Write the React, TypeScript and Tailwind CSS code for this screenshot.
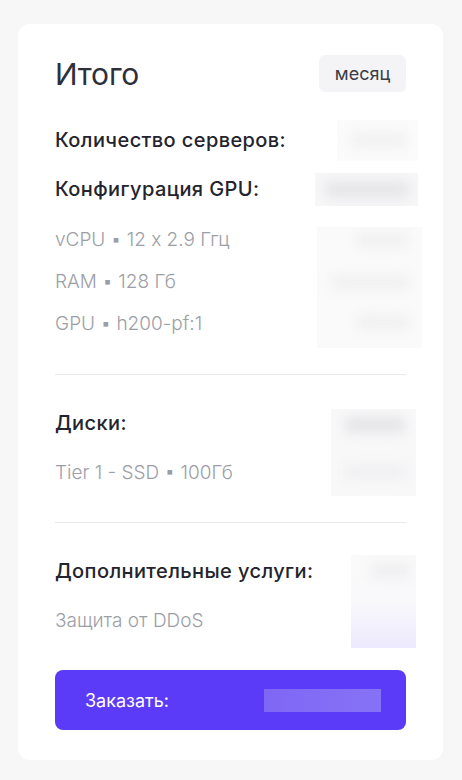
import React from "react";

export default function App() {
  const font = { fontFamily: "Inter, 'Noto Sans', sans-serif" };
  return (
    <div className="min-h-[780px] w-[462px] bg-[#f7f7f7] pt-[24px] pl-[18px]" style={font}>
      <div className="flex w-[425px] flex-col rounded-[12px] bg-white px-[37px] pt-[31px] pb-[30px]">
        {/* header */}
        <div className="flex h-[37px] items-center justify-between">
          <div className="text-[30px] leading-none tracking-[-0.2px] text-[#2d2f3b]">Итого</div>
          <div className="flex h-[37px] w-[87px] items-center justify-center rounded-[6px] bg-[#f4f4f6] text-[18px] text-[#3a3c47]">
            месяц
          </div>
        </div>

        {/* servers */}
        <div className="mt-[31px] flex h-[34px] items-center justify-between">
          <div className="text-[20px] font-medium tracking-[0.4px] text-[#23242d]">Количество серверов:</div>
          <div className="relative -mr-[12px] h-[41px] w-[81px] overflow-hidden bg-[#fbfbfb]">
            <div className="absolute left-[14px] top-[12px] h-[16px] w-[56px] rounded bg-[#f1f1f2] blur-[6px]" />
          </div>
        </div>

        <div className="mt-[15px] flex h-[34px] items-center justify-between">
          <div className="text-[20px] font-medium tracking-[0.4px] text-[#23242d]">Конфигурация GPU:</div>
          <div className="relative -mr-[12px] h-[33px] w-[103px] overflow-hidden bg-[#f7f7f8]">
            <div className="absolute left-[10px] top-[8px] h-[17px] w-[84px] rounded bg-[#e6e6e9] blur-[6px]" />
          </div>
        </div>

        <div className="mt-[13px] flex justify-between">
          <div className="flex flex-col text-[19px] font-light text-[#9c9ea6] [font-feature-settings:'calt'_0]">
            <div className="flex h-[42px] items-center">vCPU ▪ 12 x 2.9 Ггц</div>
            <div className="flex h-[42px] items-center">RAM ▪ 128 Гб</div>
            <div className="flex h-[42px] items-center">GPU ▪ h200-pf:1</div>
          </div>
          <div className="relative -mr-[16px] mt-[8px] h-[121px] w-[105px] overflow-hidden bg-[#fafafa]">
            <div className="absolute left-[40px] top-[6px] h-[14px] w-[50px] rounded bg-[#f0f0f1] blur-[6px]" />
            <div className="absolute left-[14px] top-[48px] h-[14px] w-[78px] rounded bg-[#f0f0f1] blur-[6px]" />
            <div className="absolute left-[40px] top-[88px] h-[14px] w-[52px] rounded bg-[#f0f0f1] blur-[6px]" />
          </div>
        </div>

        <div className="mt-[26px] h-px bg-[#e9e9ed]" />

        {/* disks */}
        <div className="mt-[31px] flex justify-between">
          <div className="flex flex-col">
            <div className="flex h-[34px] items-center text-[20px] font-medium tracking-[0.4px] text-[#23242d]">Диски:</div>
            <div className="mt-[12px] flex h-[42px] items-center text-[19px] font-light text-[#9c9ea6]">
              Tier 1 - SSD ▪ 100Гб
            </div>
          </div>
          <div className="relative -mr-[10px] mt-[3px] h-[87px] w-[85px] overflow-hidden bg-[#f8f8f9]">
            <div className="absolute left-[14px] top-[8px] h-[16px] w-[60px] rounded bg-[#e5e5e8] blur-[6px]" />
            <div className="absolute left-[14px] top-[56px] h-[14px] w-[60px] rounded bg-[#efeff1] blur-[6px]" />
          </div>
        </div>

        <div className="mt-[26px] h-px bg-[#e9e9ed]" />

        {/* extra */}
        <div className="mt-[31px] flex justify-between">
          <div className="flex flex-col">
            <div className="flex h-[34px] items-center text-[20px] font-medium tracking-[0.4px] text-[#23242d]">
              Дополнительные услуги:
            </div>
            <div className="mt-[12px] flex h-[42px] items-center text-[19px] font-light text-[#9c9ea6]">
              Защита от DDoS
            </div>
          </div>
          <div className="relative -mr-[10px] mt-[1px] h-[93px] w-[65px] overflow-hidden bg-gradient-to-b from-[#fafafa] via-[#f9f9fb] to-[#ede9fd]">
            <div className="absolute left-[20px] top-[8px] h-[16px] w-[40px] rounded bg-[#efeff1] blur-[6px]" />
          </div>
        </div>

        {/* button */}
        <div className="mt-[22px] flex h-[60px] items-center rounded-[8px] bg-[#5b3bf7] pl-[30px]">
          <div className="text-[18px] text-white">Заказать:</div>
          <div className="ml-[95px] h-[23px] w-[117px] bg-gradient-to-r from-[#7f67f5] to-[#8672f6]" />
        </div>
      </div>
    </div>
  );
}
